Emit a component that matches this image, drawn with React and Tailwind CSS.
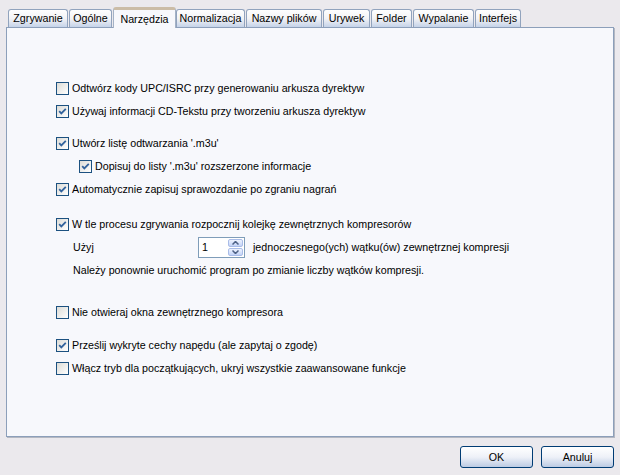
import { useState } from 'react';

const tabs = [
  { label: 'Zgrywanie', w: 'w-[61px]' },
  { label: 'Ogólne', w: 'w-[44px]' },
  { label: 'Narzędzia', w: 'w-[63px]', active: true },
  { label: 'Normalizacja', w: 'w-[70px]' },
  { label: 'Nazwy plików', w: 'w-[77px]' },
  { label: 'Urywek', w: 'w-[48px]' },
  { label: 'Folder', w: 'w-[42px]' },
  { label: 'Wypalanie', w: 'w-[62px]' },
  { label: 'Interfejs', w: 'w-[47px]' },
];

function CheckBox({ checked, onChange }) {
  return (
    <button
      onClick={onChange}
      className="w-[13px] h-[13px] shrink-0 border border-[#1c5180] bg-gradient-to-br from-[#dcdcd7] to-[#ffffff] flex items-center justify-center"
    >
      {checked && (
        <svg width="9" height="9" viewBox="0 0 9 9">
          <path d="M1.2 4.2 L3.3 6.4 L7.8 1.8" fill="none" stroke="#31629c" strokeWidth="1.8" />
        </svg>
      )}
    </button>
  );
}

function Option({ label, initial, indent, className = '' }) {
  const [on, setOn] = useState(initial);
  return (
    <div className={`flex items-center h-[23px] gap-[3px] ${indent ? 'pl-[23px]' : ''} ${className}`}>
      <CheckBox checked={on} onChange={() => setOn(!on)} />
      <span className="whitespace-nowrap">{label}</span>
    </div>
  );
}

function Spinner() {
  const [value, setValue] = useState(1);
  return (
    <div className="w-[47px] h-[21px] border border-[#7f9db9] bg-white flex items-center justify-between pl-[3px] pr-[1px]">
      <span>{value}</span>
      <div className="flex flex-col gap-[1px]">
        <button
          onClick={() => setValue(value + 1)}
          className="w-[15px] h-[8px] rounded-[2px] border border-[#a9bce8] bg-gradient-to-b from-[#eef3ff] to-[#c3d3f7] flex items-center justify-center"
        >
          <svg width="7" height="4" viewBox="0 0 7 4"><path d="M0.5 3.5 L3.5 0.5 L6.5 3.5" fill="none" stroke="#4d6185" strokeWidth="1.5" /></svg>
        </button>
        <button
          onClick={() => setValue(Math.max(1, value - 1))}
          className="w-[15px] h-[8px] rounded-[2px] border border-[#a9bce8] bg-gradient-to-b from-[#eef3ff] to-[#c3d3f7] flex items-center justify-center"
        >
          <svg width="7" height="4" viewBox="0 0 7 4"><path d="M0.5 0.5 L3.5 3.5 L6.5 0.5" fill="none" stroke="#4d6185" strokeWidth="1.5" /></svg>
        </button>
      </div>
    </div>
  );
}

function XpButton({ children }) {
  return (
    <button className="w-[73px] h-[22px] rounded-[3px] border border-[#003c74] bg-gradient-to-b from-[#ffffff] via-[#eef1f8] to-[#bccbe3] text-black">
      {children}
    </button>
  );
}

export default function App() {
  return (
    <div className="w-[620px] h-[475px] bg-[#ebe9ed] text-[10.7px] text-black font-['Liberation_Sans',Arial,sans-serif] pt-[7px] px-[6px] flex flex-col">
      {/* tab strip */}
      <div className="flex items-end pl-[2px] h-[20px]">
        {tabs.map((t) =>
          t.active ? (
            <div
              key={t.label}
              className={`${t.w} h-[21px] -mb-[1px] relative z-10 bg-[#f7f8fc] border-t-[3px] border-t-[#cbbca6] border-x border-x-[#a4b2c6] rounded-t-[3px] flex items-center justify-center`}
            >
              {t.label}
            </div>
          ) : (
            <div key={t.label} className={`${t.w} h-[18px] pr-[1px]`}>
              <div className="h-full rounded-t-[3px] border border-b-0 border-[#91a3bd] bg-gradient-to-b from-[#fefefe] via-[#f3f3f5] to-[#c5d3e9] flex items-center justify-center">
                {t.label}
              </div>
            </div>
          )
        )}
      </div>

      {/* panel */}
      <div className="h-[410px] border border-[#8c9fba] bg-[#f7f8fc] shadow-[1px_1px_0_#b4b8c2] pt-[49px] pl-[49px] flex flex-col">
        <Option label="Odtwórz kody UPC/ISRC przy generowaniu arkusza dyrektyw" initial={false} />
        <Option label="Używaj informacji CD-Tekstu przy tworzeniu arkusza dyrektyw" initial={true} />
        <Option label="Utwórz listę odtwarzania '.m3u'" initial={true} className="mt-[9px]" />
        <Option label="Dopisuj do listy '.m3u' rozszerzone informacje" initial={true} indent />
        <Option label="Automatycznie zapisuj sprawozdanie po zgraniu nagrań" initial={true} />
        <Option label="W tle procesu zgrywania rozpocznij kolejkę zewnętrznych kompresorów" initial={true} className="mt-[12px]" />
        <div className="flex items-center h-[23px] pl-[17px]">
          <span className="w-[125px]">Użyj</span>
          <Spinner />
          <span className="ml-[8px] whitespace-nowrap">jednoczesnego(ych) wątku(ów) zewnętrznej kompresji</span>
        </div>
        <div className="flex items-center h-[23px] pl-[17px]">
          Należy ponownie uruchomić program po zmianie liczby wątków kompresji.
        </div>
        <Option label="Nie otwieraj okna zewnętrznego kompresora" initial={false} className="mt-[19px]" />
        <Option label="Prześlij wykryte cechy napędu (ale zapytaj o zgodę)" initial={true} className="mt-[10px]" />
        <Option label="Włącz tryb dla początkujących, ukryj wszystkie zaawansowane funkcje" initial={false} />
      </div>

      {/* buttons */}
      <div className="flex justify-end gap-[8px] mt-[9px]">
        <XpButton>OK</XpButton>
        <XpButton>Anuluj</XpButton>
      </div>
    </div>
  );
}
